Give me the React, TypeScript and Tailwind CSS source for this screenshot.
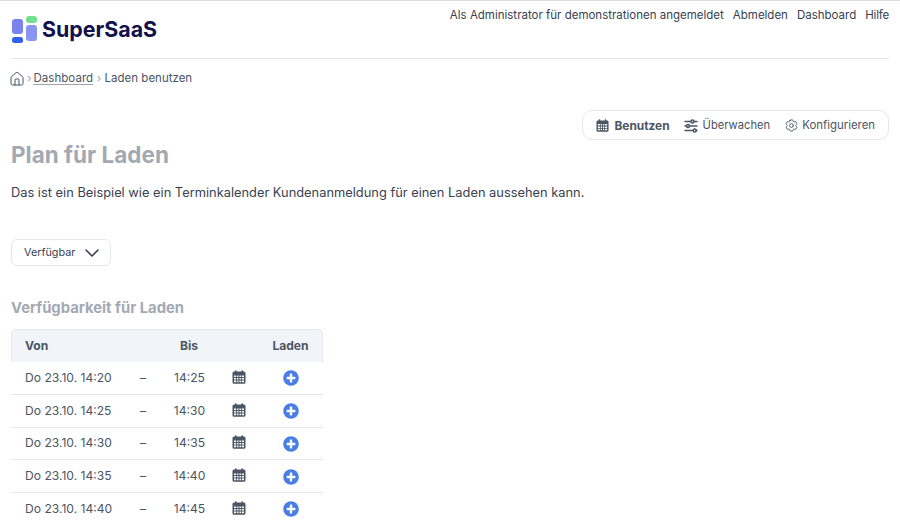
import { Home, ChevronDown } from "lucide-react";
import { TbAdjustmentsHorizontal } from "react-icons/tb";
import { HiOutlineCog6Tooth } from "react-icons/hi2";

function Cal({ size = 14, color = "#4b5563" }: { size?: number; color?: string }) {
  return (
    <svg width={size} height={size} viewBox="0 0 14 14" className="shrink-0">
      <rect x="3" y="0.3" width="1.6" height="3" rx="0.6" fill={color} />
      <rect x="9.4" y="0.3" width="1.6" height="3" rx="0.6" fill={color} />
      <path
        fillRule="evenodd"
        fill={color}
        d="M2 1.6h10.0a1.5 1.5 0 0 1 1.5 1.5v9.2a1.5 1.5 0 0 1-1.5 1.5H2a1.5 1.5 0 0 1-1.5-1.5V3.1A1.5 1.5 0 0 1 2 1.6zM2 5.4v1.7h2.2V5.4zM5.1 5.4v1.7h1.4V5.4zM7.5 5.4v1.7h1.4V5.4zM9.8 5.4v1.7H12V5.4zM2 8v1.6h2.2V8zM5.1 8v1.6h1.4V8zM7.5 8v1.6h1.4V8zM9.8 8v1.6H12V8zM2 10.5v1.7h2.2v-1.7zM5.1 10.5v1.7h1.4v-1.7zM7.5 10.5v1.7h1.4v-1.7zM9.8 10.5v1.7H12v-1.7z"
      />
    </svg>
  );
}

function Plus() {
  return (
    <svg width="16" height="16" viewBox="0 0 16 16" className="shrink-0">
      <circle cx="8" cy="8" r="7.8" fill="#4a7ee6" />
      <rect x="3.6" y="6.8" width="8.8" height="2.4" rx="0.6" fill="#fff" />
      <rect x="6.8" y="3.6" width="2.4" height="8.8" rx="0.6" fill="#fff" />
    </svg>
  );
}

const rows = [
  ["Do 23.10. 14:20", "14:25"],
  ["Do 23.10. 14:25", "14:30"],
  ["Do 23.10. 14:30", "14:35"],
  ["Do 23.10. 14:35", "14:40"],
  ["Do 23.10. 14:40", "14:45"],
];

export default function App() {
  return (
    <div className="w-[900px] h-[525px] overflow-hidden bg-white border-t border-[#dcdcdc] font-['Inter',sans-serif] text-[#374151]">
      <div className="mx-[11px] w-[878px]">
        <header className="h-[58px] flex justify-between border-b border-[#e5e7eb]">
          <div className="flex items-center gap-[5px] h-[58px] -mt-[1px]">
            <svg width="25" height="27" viewBox="0 0 25 27" className="ml-[1px] mt-[1px]">
              <rect x="0" y="3" width="11" height="15" rx="3" fill="#7b83ef" />
              <rect x="0" y="21" width="11" height="6" rx="2.5" fill="#3064e8" />
              <rect x="14" y="0" width="11" height="7" rx="3" fill="#73e08f" />
              <rect x="14" y="9" width="11" height="16" rx="3" fill="#8b93f3" />
            </svg>
            <span className="text-[21.4px] font-bold text-[#12124a]">SuperSaaS</span>
          </div>
          <nav className="flex gap-[9px] text-[11.5px] text-[#374151] pt-[6px] leading-[16px]">
            <span>Als Administrator für demonstrationen angemeldet</span>
            <span>Abmelden</span>
            <span>Dashboard</span>
            <span className="tracking-[-0.2px]">Hilfe</span>
          </nav>
        </header>

        <div className="flex items-center h-[16px] mt-[12px] text-[11.5px] text-[#4b5563]">
          <Home size={16} strokeWidth={1.5} className="-ml-[2px]" />
          <span className="mx-[2px] text-[#9ca3af]">›</span>
          <span className="underline underline-offset-2 decoration-[#9ca3af] tracking-[0.05px]">Dashboard</span>
          <span className="mx-[3.5px] text-[#9ca3af]">›</span>
          <span>Laden benutzen</span>
        </div>

        <div className="flex justify-end mt-[23px]">
          <div className="flex items-center h-[30px] px-[13px] gap-[15px] rounded-[10px] border border-[#e5e7eb] text-[#4b5563]">
            <span className="flex items-center gap-[5px] font-bold text-[11.9px] pt-[1px]">
              <Cal size={13} />
              Benutzen
            </span>
            <span className="flex items-center gap-[6px] text-[11.2px] pt-[1px]">
              <TbAdjustmentsHorizontal size={18} className="-mx-[3px]" />
              Überwachen
            </span>
            <span className="flex items-center gap-[5px] text-[11.4px] pt-[1px]">
              <HiOutlineCog6Tooth size={15} className="-mx-[1.5px]" />
              Konfigurieren
            </span>
          </div>
        </div>

        <h1 className="text-[22.5px] leading-[32px] font-bold text-[#a3a9b3] -mt-[1px]">Plan für Laden</h1>
        <p className="text-[12.85px] leading-[20px] text-[#374151] mt-[12px]">
          Das ist ein Beispiel wie ein Terminkalender Kundenanmeldung für einen Laden aussehen kann.
        </p>

        <button className="flex items-center justify-between w-[100px] h-[27px] mt-[36px] pl-[12px] pr-[6px] rounded-[6px] border border-[#e5e7eb] text-[10.8px] text-[#374151]">
          <span className="mt-[1px]">Verfügbar</span>
          <ChevronDown size={24} strokeWidth={1.6} />
        </button>

        <h2 className="text-[14.8px] leading-[20px] font-bold text-[#a3a9b3] mt-[32px]">Verfügbarkeit für Laden</h2>

        <div className="w-[312px] mt-[11px] text-[12.1px]">
          <div className="flex items-center h-[33px] rounded-t-[5px] bg-[#f1f4f9] border border-b-0 border-[#e5e7eb] font-bold text-[#4b5563]">
            <span className="w-[113px] pl-[13px]">Von</span>
            <span className="w-[42px]"></span>
            <span className="w-[44px] text-center">Bis</span>
            <span className="w-[42px]"></span>
            <span className="flex-1 text-center pl-[6px]">Laden</span>
          </div>
          {rows.map(([from, to]) => (
            <div key={from} className="flex items-center h-[32.75px] border-b border-[#e5e7eb] text-[#4b5563]">
              <span className="w-[114px] pl-[14px]">{from}</span>
              <span className="w-[36px] text-center">–</span>
              <span className="w-[57px] text-center">{to}</span>
              <span className="w-[42px] flex justify-center -mt-[2px]"><Cal size={14} /></span>
              <span className="flex-1 flex justify-center pr-[2px] mt-[1px]"><Plus /></span>
            </div>
          ))}
        </div>
      </div>
    </div>
  );
}
